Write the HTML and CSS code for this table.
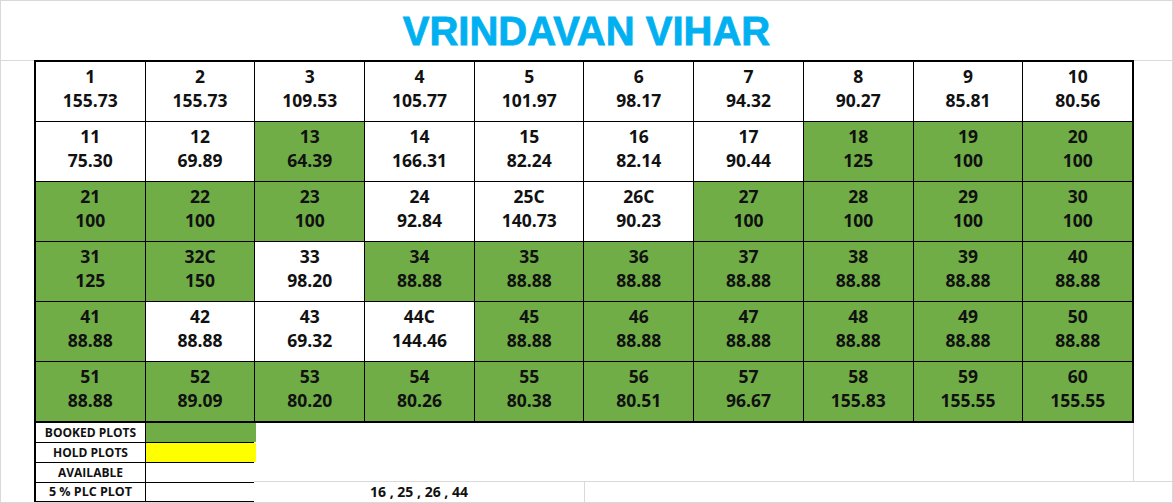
FILE: index.html
```html
<!DOCTYPE html>
<html lang="en">
<head>
<meta charset="utf-8">
<title>Vrindavan Vihar</title>
<link rel="stylesheet" href="styles.css">
</head>
<body>
<div class="sheet">
  <header class="title">VRINDAVAN VIHAR</header>

  <section class="middle">
    <div class="gutter-left"></div>
    <div class="plots">
      <div class="cell"><span>1</span><span>155.73</span></div>
      <div class="cell"><span>2</span><span>155.73</span></div>
      <div class="cell"><span>3</span><span>109.53</span></div>
      <div class="cell"><span>4</span><span>105.77</span></div>
      <div class="cell"><span>5</span><span>101.97</span></div>
      <div class="cell"><span>6</span><span>98.17</span></div>
      <div class="cell"><span>7</span><span>94.32</span></div>
      <div class="cell"><span>8</span><span>90.27</span></div>
      <div class="cell"><span>9</span><span>85.81</span></div>
      <div class="cell"><span>10</span><span>80.56</span></div>

      <div class="cell"><span>11</span><span>75.30</span></div>
      <div class="cell"><span>12</span><span>69.89</span></div>
      <div class="cell booked"><span>13</span><span>64.39</span></div>
      <div class="cell"><span>14</span><span>166.31</span></div>
      <div class="cell"><span>15</span><span>82.24</span></div>
      <div class="cell"><span>16</span><span>82.14</span></div>
      <div class="cell"><span>17</span><span>90.44</span></div>
      <div class="cell booked"><span>18</span><span>125</span></div>
      <div class="cell booked"><span>19</span><span>100</span></div>
      <div class="cell booked"><span>20</span><span>100</span></div>

      <div class="cell booked"><span>21</span><span>100</span></div>
      <div class="cell booked"><span>22</span><span>100</span></div>
      <div class="cell booked"><span>23</span><span>100</span></div>
      <div class="cell"><span>24</span><span>92.84</span></div>
      <div class="cell"><span>25C</span><span>140.73</span></div>
      <div class="cell"><span>26C</span><span>90.23</span></div>
      <div class="cell booked"><span>27</span><span>100</span></div>
      <div class="cell booked"><span>28</span><span>100</span></div>
      <div class="cell booked"><span>29</span><span>100</span></div>
      <div class="cell booked"><span>30</span><span>100</span></div>

      <div class="cell booked"><span>31</span><span>125</span></div>
      <div class="cell booked"><span>32C</span><span>150</span></div>
      <div class="cell"><span>33</span><span>98.20</span></div>
      <div class="cell booked"><span>34</span><span>88.88</span></div>
      <div class="cell booked"><span>35</span><span>88.88</span></div>
      <div class="cell booked"><span>36</span><span>88.88</span></div>
      <div class="cell booked"><span>37</span><span>88.88</span></div>
      <div class="cell booked"><span>38</span><span>88.88</span></div>
      <div class="cell booked"><span>39</span><span>88.88</span></div>
      <div class="cell booked"><span>40</span><span>88.88</span></div>

      <div class="cell booked"><span>41</span><span>88.88</span></div>
      <div class="cell"><span>42</span><span>88.88</span></div>
      <div class="cell"><span>43</span><span>69.32</span></div>
      <div class="cell"><span>44C</span><span>144.46</span></div>
      <div class="cell booked"><span>45</span><span>88.88</span></div>
      <div class="cell booked"><span>46</span><span>88.88</span></div>
      <div class="cell booked"><span>47</span><span>88.88</span></div>
      <div class="cell booked"><span>48</span><span>88.88</span></div>
      <div class="cell booked"><span>49</span><span>88.88</span></div>
      <div class="cell booked"><span>50</span><span>88.88</span></div>

      <div class="cell booked"><span>51</span><span>88.88</span></div>
      <div class="cell booked"><span>52</span><span>89.09</span></div>
      <div class="cell booked"><span>53</span><span>80.20</span></div>
      <div class="cell booked"><span>54</span><span>80.26</span></div>
      <div class="cell booked"><span>55</span><span>80.38</span></div>
      <div class="cell booked"><span>56</span><span>80.51</span></div>
      <div class="cell booked"><span>57</span><span>96.67</span></div>
      <div class="cell booked"><span>58</span><span>155.83</span></div>
      <div class="cell booked"><span>59</span><span>155.55</span></div>
      <div class="cell booked"><span>60</span><span>155.55</span></div>
    </div>
    <div class="gutter-right"></div>
  </section>

  <section class="lower">
    <div class="gutter-left-low"></div>
    <div class="legend">
      <div class="lg-label">BOOKED PLOTS</div><div class="lg-swatch booked"></div>
      <div class="lg-label">HOLD PLOTS</div><div class="lg-swatch hold"></div>
      <div class="lg-label">AVAILABLE</div><div class="lg-swatch"></div>
      <div class="lg-label lg-plc">5 % PLC PLOT</div><div class="lg-swatch"></div>
    </div>
    <div class="rest">
      <div class="rest-top"><div class="rest-box"></div></div>
      <div class="rest-bottom"><div class="plc-list">16 , 25 , 26 , 44</div></div>
    </div>
  </section>
</div>
</body>
</html>
```

FILE: styles.css
```css
* {
  box-sizing: border-box;
}

html, body {
  margin: 0;
  padding: 0;
  background: #ffffff;
}

.sheet {
  width: 1173px;
  height: 503px;
  border: 1px solid #d9d9d9;
  overflow: hidden;
  display: flex;
  flex-direction: column;
  font-family: "Open Sans", "Liberation Sans", sans-serif;
  color: #111;
}

.title {
  height: 59px;
  flex: none;
  display: flex;
  align-items: center;
  justify-content: center;
  font-family: "Liberation Sans", Arial, sans-serif;
  font-weight: 700;
  font-size: 40px;
  color: #00b0f0;
  -webkit-text-stroke: 0.8px #00b0f0;
  padding-top: 1px;
}

.middle {
  display: flex;
  flex: none;
}

.gutter-left {
  width: 33px;
  flex: none;
  border-top: 1px solid #d9d9d9;
}

.gutter-right {
  flex: 1;
  border-top: 1px solid #d9d9d9;
}

.plots {
  width: 1100px;
  flex: none;
  display: grid;
  grid-template-columns: repeat(10, 1fr);
  grid-template-rows: repeat(6, 59px);
  gap: 1px;
  background: #000;
  border: 2px solid #000;
}

.cell {
  background: #fff;
  display: flex;
  flex-direction: column;
  align-items: center;
  padding-top: 2px;
  font-weight: 700;
  font-size: 17.5px;
  line-height: 24px;
}

.booked {
  background: #70ad47;
}

.hold {
  background: #ffff00;
}

.lower {
  display: flex;
  flex: 1;
}

.gutter-left-low {
  width: 33px;
  flex: none;
}

.legend {
  width: 220px;
  flex: none;
  display: grid;
  grid-template-columns: 109px 110px;
  grid-template-rows: 19px 19px 19px 18px;
  gap: 1px;
  background: #000;
  border-left: 2px solid #000;
  border-right: 1px solid #000;
  border-bottom: 1px solid #000;
  align-self: flex-start;
}

.lg-label {
  background: #fff;
  font-weight: 700;
  font-size: 12px;
  line-height: 19px;
  text-align: center;
  white-space: nowrap;
}

.lg-plc {
  font-size: 12.5px;
  line-height: 18px;
}

.lg-swatch {
  background: #fff;
}

.lg-swatch.booked {
  background: #70ad47;
}

.lg-swatch.hold {
  background: #ffff00;
}

.rest {
  flex: 1;
  display: flex;
  flex-direction: column;
}

.rest-top {
  height: 59px;
  border-bottom: 1px solid #d9d9d9;
  display: flex;
}

.rest-box {
  width: 880px;
  border-right: 1px solid #d9d9d9;
}

.rest-bottom {
  flex: 1;
  display: flex;
}

.plc-list {
  width: 331px;
  border-right: 1px solid #d9d9d9;
  font-weight: 700;
  font-size: 14px;
  line-height: 19px;
  text-align: center;
}
```
